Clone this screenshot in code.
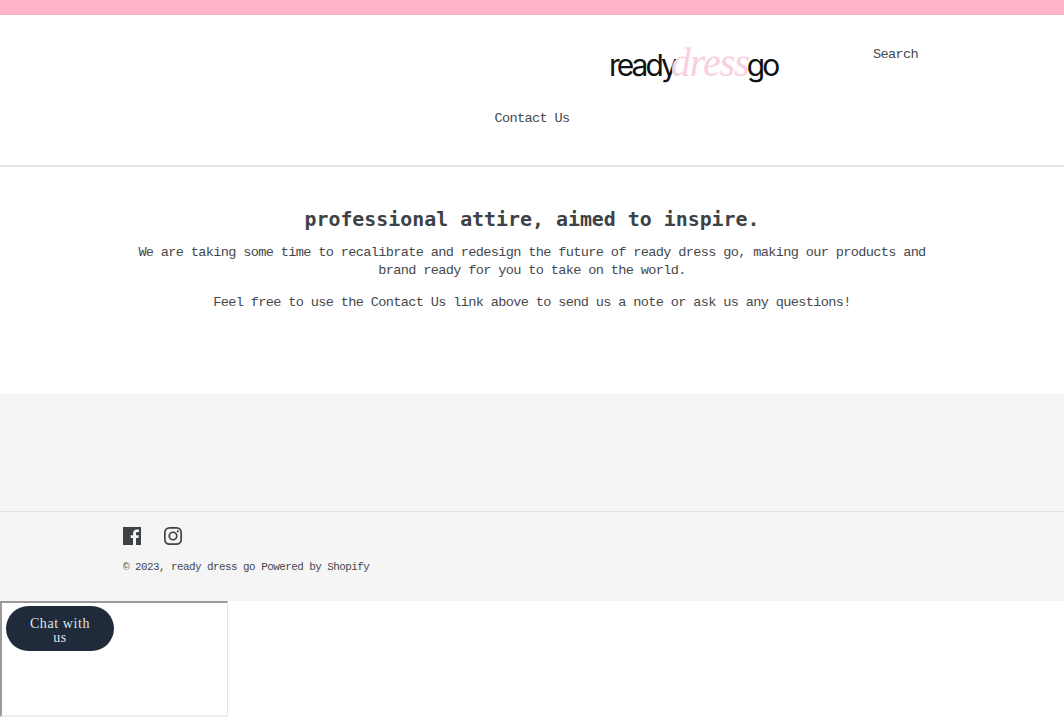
<style>
:global(body) { margin: 0; background: #fff; }
.page { font-family: "Liberation Mono", monospace; font-size: 13.6px; letter-spacing: -0.66px; color: #45494d; position: relative; height: 722px; overflow: hidden; }
.announce { height: 15px; background: #ffb3c7; }
.header { height: 150px; border-bottom: 2px solid #e4e4e4; display: flex; flex-direction: column; align-items: center; }
.top { width: 1064px; height: 83px; display: grid; grid-template-columns: 609px 171px 1fr; align-items: start; }
.logo { grid-column: 2; margin-top: 27px; height: 42px; display: flex; align-items: baseline; font-family: "Inter", sans-serif; font-weight: 400; font-size: 30px; letter-spacing: -3px; color: #111; line-height: 42px; }
.logo i { font-family: "Liberation Serif", serif; font-size: 40px; color: #f8d0de; letter-spacing: -1px; margin: 0 -2px 0 -4px; }
.search { margin: 31px 0 0 93px; line-height: 18px; }
.nav { line-height: 18px; margin-top: 12px; }
main { height: 227px; text-align: center; box-sizing: border-box; padding-top: 40px; }
h1 { font-family: "DejaVu Sans Mono", monospace; font-weight: 700; font-size: 19.9px; letter-spacing: 0; line-height: 26px; margin: 0 0 11px; color: #3d4246; }
p { margin: 0 auto 14px; line-height: 18px; width: 800px; }
.footer { background: #f5f5f5; height: 207px; }
.upper { height: 116px; border-bottom: 1px solid #e3e3e3; padding-top: 1px; }
.lower { padding: 14px 0 0 123px; }
.icons { display: flex; gap: 23px; height: 20px; }
.icons svg { width: 18px; height: 20px; fill: #3d4246; }
.copy { font-size: 10.9px; letter-spacing: -0.53px; line-height: 14px; margin-top: 14px; }
.widget { position: absolute; left: 0; top: 601px; width: 228px; height: 116px; box-sizing: border-box; background: #fff; border-style: solid; border-width: 2px 1px 2px 2px; border-color: #9a9a9a #e2e2e2 #eeeeee #9a9a9a; }
.chat { position: absolute; left: 4px; top: 3px; width: 108px; height: 45px; box-sizing: border-box; border-radius: 23px; background: #1f2b3a; color: #dfe5ea; font-family: "Liberation Serif", serif; font-size: 14px; letter-spacing: 0.6px; line-height: 14px; text-align: center; display: flex; align-items: center; justify-content: center; padding: 5px 20px 0; }
</style>

<div class="page">
  <div class="announce"></div>
  <header class="header">
    <div class="top">
      <div class="logo">ready<i>dress</i>go</div>
      <div class="search">Search</div>
    </div>
    <div class="nav">Contact Us</div>
  </header>
  <main>
    <h1>professional attire, aimed to inspire.</h1>
    <p>We are taking some time to recalibrate and redesign the future of ready dress go, making our products and brand ready for you to take on the world.</p>
    <p>Feel free to use the Contact Us link above to send us a note or ask us any questions!</p>
  </main>
  <footer class="footer">
    <div class="upper"></div>
    <div class="lower">
      <div class="icons">
        <svg viewBox="0 0 18 20"><path fill-rule="evenodd" d="M0 1h18v18h-5v-7h2.400l.4-2.800H13V7.500c0-.8.3-1.400 1.400-1.400H16V3.600c-.3 0-1.200-.1-2.200-.1-2.200 0-3.700 1.300-3.700 3.800v1.900H7.700V12H10v7H0z"/></svg>
        <svg viewBox="0 0 18 20"><path fill-rule="evenodd" d="M5.500 1h7A5.500 5.500 0 0 1 18 6.500v7a5.500 5.500 0 0 1-5.500 5.500h-7A5.500 5.500 0 0 1 0 13.500v-7A5.500 5.500 0 0 1 5.500 1zm0 1.700A3.800 3.800 0 0 0 1.700 6.500v7a3.800 3.800 0 0 0 3.800 3.800h7a3.800 3.800 0 0 0 3.800-3.800v-7a3.800 3.800 0 0 0-3.800-3.800zM9 5.400a4.600 4.600 0 1 1 0 9.200 4.600 4.600 0 0 1 0-9.200zm0 1.700a2.900 2.900 0 1 0 0 5.800 2.900 2.900 0 0 0 0-5.800zm4.800-2.900a1.100 1.100 0 1 1 0 2.200 1.100 1.100 0 0 1 0-2.200z"/></svg>
      </div>
      <div class="copy">© 2023, ready dress go Powered by Shopify</div>
    </div>
  </footer>
  <div class="widget"><div class="chat">Chat with us</div></div>
</div>
